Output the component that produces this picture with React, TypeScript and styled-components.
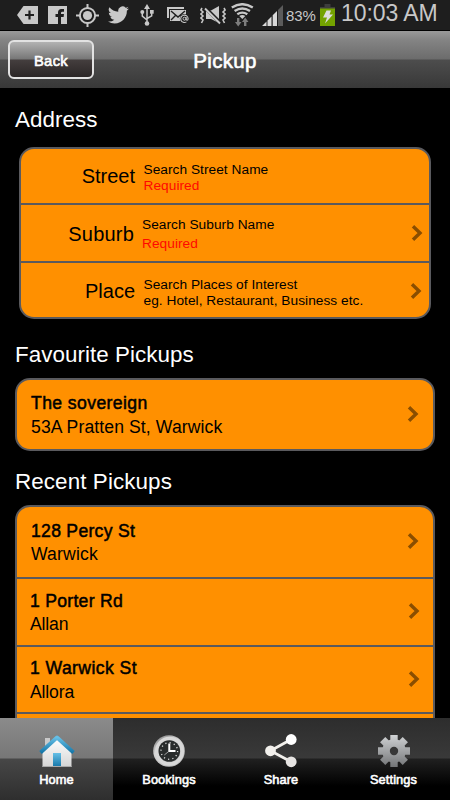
import React from "react";
import styled, { createGlobalStyle } from "styled-components";

const GlobalStyle = createGlobalStyle`
  * { box-sizing: border-box; }
  html, body { margin: 0; background: #000; }
  body { font-family: "Liberation Sans", Arial, sans-serif; overflow: hidden; }
`;

const Screen = styled.div`
  width: 450px;
  height: 800px;
  display: flex;
  flex-direction: column;
  overflow: hidden;
  background: #000;
`;

const StatusBar = styled.header`
  height: 30px;
  flex: none;
  display: flex;
  align-items: flex-start;
  background: #1e1e1e;
  color: #c8c8c8;
`;

const StatusIcon = styled.svg<{ $left: number; $top: number }>`
  flex: none;
  display: block;
  margin-left: ${(p) => p.$left}px;
  margin-top: ${(p) => p.$top}px;
`;

const Battery = styled.span`
  margin-left: 3px;
  width: 33px;
  flex: none;
  font-size: 15px;
  line-height: 31px;
  letter-spacing: -0.1px;
  white-space: nowrap;
`;

const Clock = styled.span`
  margin-left: 6px;
  font-size: 23px;
  line-height: 27px;
  letter-spacing: -0.08px;
  white-space: nowrap;
`;

const NavBar = styled.nav`
  height: 59px;
  flex: none;
  display: grid;
  grid-template-columns: 94px 1fr 94px;
  align-items: start;
  border-top: 1px solid #000;
  border-bottom: 1px solid #000;
  background: linear-gradient(#999 0, #858585 8px, #6c6c6c 28px, #4d4d4d 29px, #383838 57px);
`;

const BackButton = styled.button`
  margin: 9px 0 0 8px;
  width: 86px;
  height: 39px;
  padding: 1px 0 0;
  border: 2px solid #e2e2e2;
  border-radius: 6px;
  background: linear-gradient(#b2b2b2 0, #777 17px, #443e3e 18px, #2b2626 35px);
  color: #fff;
  font: 14.8px/36px "Liberation Sans", Arial, sans-serif;
  -webkit-text-stroke: 0.6px #fff;
  letter-spacing: 0.3px;
`;

const Title = styled.h1`
  margin: 0;
  text-align: center;
  color: #fff;
  font-size: 20.5px;
  font-weight: 400;
  line-height: 57px;
  letter-spacing: 0.3px;
  padding-top: 1px;
  -webkit-text-stroke: 0.6px #fff;
`;

const Content = styled.main`
  flex: 1;
  min-height: 0;
  overflow: hidden;
  padding: 0 15px;
`;

const Heading = styled.h2<{ $top: number; $height: number; $spacing?: number }>`
  margin: 0;
  height: ${(p) => p.$height}px;
  padding-top: ${(p) => p.$top}px;
  color: #fff;
  font-size: 22.4px;
  font-weight: 400;
  line-height: 26px;
  letter-spacing: ${(p) => p.$spacing ?? 0}px;
  white-space: nowrap;
`;

const Card = styled.section<{ $inset?: boolean }>`
  margin: 0 ${(p) => (p.$inset ? 4 : 0)}px;
  border: 2px solid #5a5a5e;
  border-radius: 15px;
  background: #ff9000;
  overflow: hidden;
`;

const Row = styled.div<{ $height: number; $right: number }>`
  display: flex;
  height: ${(p) => p.$height}px;
  padding-right: ${(p) => p.$right}px;
  color: #000;
  & + & {
    border-top: 2px solid #5a5a5e;
  }
`;

const FieldLabel = styled.div<{ $width: number; $top: number; $spacing: number }>`
  width: ${(p) => p.$width}px;
  flex: none;
  padding-top: ${(p) => p.$top}px;
  text-align: right;
  font-size: 20px;
  line-height: 24px;
  letter-spacing: ${(p) => p.$spacing}px;
`;

const Details = styled.div<{ $top: number; $left: number; $gap: number }>`
  flex: 1;
  display: flex;
  flex-direction: column;
  gap: ${(p) => p.$gap}px;
  padding: ${(p) => p.$top}px 0 0 ${(p) => p.$left}px;
  font-size: 13.7px;
  line-height: 16px;
  letter-spacing: 0.04px;
  white-space: nowrap;
`;

const Detail = styled.span<{ $required?: boolean }>`
  color: ${(p) => (p.$required ? "#ff0800" : "#000")};
`;

const Place = styled.div<{ $left: number; $top: number }>`
  flex: 1;
  padding: ${(p) => p.$top}px 0 0 ${(p) => p.$left}px;
  white-space: nowrap;
`;

const PlaceName = styled.div<{ $spacing: number }>`
  font-size: 17.6px;
  line-height: 24px;
  letter-spacing: ${(p) => p.$spacing}px;
  -webkit-text-stroke: 0.5px #000;
`;

const PlaceAddress = styled.div<{ $spacing: number; $line: number }>`
  font-size: 17.6px;
  line-height: ${(p) => p.$line}px;
  letter-spacing: ${(p) => p.$spacing}px;
`;

const ChevronIcon = styled.svg<{ $top: number }>`
  flex: none;
  display: block;
  margin-top: ${(p) => p.$top}px;
`;

const TabBar = styled.footer`
  flex: none;
  height: 82px;
  display: grid;
  grid-template-columns: 113px 112px 112px 113px;
`;

const Tab = styled.div<{ $active?: boolean }>`
  display: flex;
  flex-direction: column;
  align-items: center;
  padding-top: 15px;
  background: ${(p) =>
    p.$active
      ? "linear-gradient(#8b8b8b 0, #777 40px, #474747 41px, #2e2e2e 82px)"
      : "linear-gradient(#2d2d2d 0, #393939 40px, #202020 41px, #000 68px)"};
`;

const TabLabel = styled.span`
  margin-top: 1px;
  color: #fff;
  font-size: 12.8px;
  line-height: 16px;
  letter-spacing: 0.1px;
  -webkit-text-stroke: 0.6px #fff;
`;

function Chevron({ top }: { top: number }) {
  return (
    <ChevronIcon $top={top} width="12" height="18" viewBox="0 0 12 18">
      <path d="M2 2.2 9 9 2 15.8" fill="none" stroke="#8a4e00" strokeWidth="3.4" />
    </ChevronIcon>
  );
}

function StatusIcons() {
  return (
    <>
      <StatusIcon $left={17} $top={5} width="21" height="20" viewBox="0 0 21 20">
        <path d="M6.5 1H21v18H6.5L0 10z" fill="#c8c8c8" />
        <path d="M8 10h9M12.5 5.5v9" stroke="#1e1e1e" strokeWidth="2.2" />
      </StatusIcon>
      <StatusIcon $left={10} $top={5} width="19" height="20" viewBox="0 0 19 20">
        <path d="M0 1h19v18H0z" fill="#c8c8c8" />
        <path d="M10 19v-7H7.5V9H10V7.5q0-3.5 3.5-3.5H16v2.8h-1.8q-1.2 0-1.2 1.2v1h3l-.4 3H13v7z" fill="#1e1e1e" />
      </StatusIcon>
      <StatusIcon $left={9} $top={4} width="23" height="23" viewBox="0 0 23 23">
        <g fill="none" stroke="#c8c8c8" strokeWidth="2">
          <circle cx="11.5" cy="11.5" r="7.6" />
          <path d="M11.5 0v4M11.5 19v4M0 11.5h4M19 11.5h4" />
        </g>
        <circle cx="11.5" cy="11.5" r="4.6" fill="#c8c8c8" />
      </StatusIcon>
      <StatusIcon $left={9} $top={5} width="21" height="19" viewBox="0 1.5 24 20">
        <path
          d="M23.95 4.57a10 10 0 0 1-2.82.77 4.96 4.96 0 0 0 2.16-2.72c-.95.55-2 .96-3.13 1.18a4.92 4.92 0 0 0-8.38 4.48C7.69 8.1 4.07 6.13 1.64 3.16a4.92 4.92 0 0 0 1.52 6.57 4.9 4.9 0 0 1-2.23-.61v.06a4.92 4.92 0 0 0 3.95 4.83 5 5 0 0 1-2.21.08 4.94 4.94 0 0 0 4.6 3.42A9.87 9.87 0 0 1 0 19.54a14 14 0 0 0 7.55 2.21c9.05 0 14-7.5 14-13.98l-.02-.64a9.9 9.9 0 0 0 2.42-2.56z"
          fill="#c8c8c8"
        />
      </StatusIcon>
      <StatusIcon $left={11} $top={4} width="14" height="23" viewBox="0 0 14 23">
        <g fill="none" stroke="#c8c8c8" strokeWidth="1.5">
          <path d="M7 3v16M2.3 8v4.2L7 16M11.7 8v3.8L7 14.5" />
        </g>
        <path d="M7 0l3 5H4z" fill="#c8c8c8" />
        <circle cx="7" cy="19.5" r="2.3" fill="#c8c8c8" />
        <circle cx="2.3" cy="8" r="2" fill="#c8c8c8" />
        <path d="M10 6h3.7v3.7H10z" fill="#c8c8c8" />
      </StatusIcon>
      <StatusIcon $left={13} $top={6} width="22" height="18" viewBox="0 0 22 18">
        <path d="M0 1h17v2H2v9H0z" fill="#c8c8c8" />
        <path d="M3 4h16v11H3z" fill="#c8c8c8" />
        <path d="M4 5l7 6 7-6M4 14l5-5M18 13l-5-4" fill="none" stroke="#1e1e1e" strokeWidth="1.4" />
        <circle cx="17.5" cy="12.8" r="4.7" fill="#1e1e1e" />
        <path d="M19.4 15.9a3.7 3.7 0 1 1 1.7-3.2c0 2-2 2-2 .3v-2" fill="none" stroke="#c8c8c8" strokeWidth="1.1" />
        <circle cx="17.5" cy="12.7" r="1.5" fill="none" stroke="#c8c8c8" />
      </StatusIcon>
      <StatusIcon $left={11} $top={6} width="26" height="19" viewBox="0 0 26 19">
        <g fill="none" stroke="#c8c8c8" strokeWidth="1.6">
          <path d="M2 2L.9 4 3 6 .9 8 3 10 .9 12 3 14 1.5 17M24 2l1.1 2L23 6l2.1 2L23 10l2.1 2L23 14l1.5 3" />
        </g>
        <path d="M6 4.500h5l8-4.500v17l-8-4H6z" fill="#c8c8c8" />
        <path d="M6 2.500l14 14" stroke="#1e1e1e" strokeWidth="3.6" />
        <path d="M5 2.500l15 15" stroke="#c8c8c8" strokeWidth="1.9" />
      </StatusIcon>
      <StatusIcon $left={5} $top={3} width="23" height="24" viewBox="0 0 23 24">
        <g fill="none" stroke="#c8c8c8" strokeWidth="2.4">
          <path d="M.8 4.5q10.5-6.6 21 0M3.6 8q7.7-5 15.4 0M6.3 11.3q5-3.4 10 0" />
        </g>
        <path d="M8.3 13q3-2 6 0l-3 3z" fill="#c8c8c8" />
        <path d="M6 15h2.4v4h2.1L7.2 23.5 4 19h2zM13 23h2.4v-4h2.1l-3.3-4.5L11 19h2z" fill="#7d7d7d" />
      </StatusIcon>
      <StatusIcon $left={8} $top={5} width="21" height="22" viewBox="0 0 21 22">
        <path d="M0 21l4.5-4.5V21zM5.5 15.5L9.5 11.5v9.5h-4zM10.7 10.3l4.3-4.3V21h-4.3z" fill="#d8d8d8" />
        <path d="M16 5l5-5v21h-5z" fill="#5b5b5b" />
      </StatusIcon>
    </>
  );
}

function HomeIcon() {
  return (
    <svg width="36" height="38" viewBox="0 0 36 38">
      <defs>
        <linearGradient id="roof" x1="0" y1="0" x2="0" y2="1">
          <stop offset="0" stopColor="#65bfe6" />
          <stop offset="1" stopColor="#1677a9" />
        </linearGradient>
        <linearGradient id="wall" x1="0" y1="0" x2="0" y2="1">
          <stop offset="0" stopColor="#fff" />
          <stop offset="1" stopColor="#d5d5d5" />
        </linearGradient>
      </defs>
      <path d="M6 5h5v9H6z" fill="#c9c9c9" />
      <path d="M18 5l14.5 13v16h-29V18z" fill="url(#wall)" />
      <path d="M1.5 19.5L18 4.5l16.5 15" fill="none" stroke="url(#roof)" strokeWidth="3.8" strokeLinejoin="round" />
      <path d="M14 20h8v13.5h-8z" fill="url(#roof)" />
      <path d="M3.5 33.5h29" stroke="#aaa" />
    </svg>
  );
}

function ClockIcon() {
  return (
    <svg width="34" height="38" viewBox="0 0 34 38">
      <defs>
        <linearGradient id="rim" x1="0" y1="0" x2="0.6" y2="1">
          <stop offset="0" stopColor="#777" />
          <stop offset="0.45" stopColor="#d5d5d5" />
          <stop offset="1" stopColor="#bbb" />
        </linearGradient>
      </defs>
      <circle cx="17" cy="18" r="15.8" fill="url(#rim)" />
      <circle cx="17.5" cy="18.3" r="12.8" fill="none" stroke="#d8d8d8" strokeWidth="3.5" />
      <circle cx="17.3" cy="18" r="10.8" fill="#292c2c" />
      <circle cx="17.3" cy="18" r="8.3" fill="none" stroke="#ddd" strokeWidth="1.3" strokeDasharray="1.2 3.146" />
      <path d="M17.3 10.5V18H23.5" fill="none" stroke="#fff" strokeWidth="2" />
      <path d="M17.3 18l-5 4" stroke="#bbb" strokeWidth="0.8" />
    </svg>
  );
}

function ShareIcon() {
  return (
    <svg width="34" height="38" viewBox="0 0 34 38">
      <path d="M27 6.5L6.5 17.8 27 28.8" fill="none" stroke="#f2f0ec" strokeWidth="2.8" />
      <circle cx="27.2" cy="6.5" r="5.4" fill="#fff" />
      <circle cx="6.5" cy="17.8" r="5.4" fill="#f2f0ec" />
      <circle cx="27.2" cy="28.8" r="5.4" fill="#e6e4e2" />
    </svg>
  );
}

const teeth = [0, 45, 90, 135];

function GearIcon() {
  return (
    <svg width="34" height="38" viewBox="0 0 34 38">
      <defs>
        <linearGradient id="metal" x1="0" y1="2" x2="0" y2="34" gradientUnits="userSpaceOnUse">
          <stop offset="0" stopColor="#d0d2d4" />
          <stop offset="1" stopColor="#737577" />
        </linearGradient>
        <mask id="gear">
          <circle cx="17" cy="18" r="11.8" fill="#fff" />
          {teeth.map((angle) => (
            <path key={angle} d="M13.3 2h7.4v32h-7.4z" fill="#fff" transform={`rotate(${angle} 17 18)`} />
          ))}
          <circle cx="17" cy="18" r="4.2" fill="#000" />
        </mask>
      </defs>
      <path d="M0 0h34v38H0z" fill="url(#metal)" mask="url(#gear)" />
    </svg>
  );
}

const recent = [
  { name: "128 Percy St", suburb: "Warwick", height: 70, left: 14, top: 12, line: 23, chevron: 25, right: 14, ns: 0.28, as: 0.15 },
  { name: "1 Porter Rd", suburb: "Allan", height: 68, left: 13, top: 10, line: 23, chevron: 23, right: 13, ns: 0.28, as: -0.15 },
  { name: "1 Warwick St", suburb: "Allora", height: 67, left: 13, top: 9, line: 24, chevron: 23, right: 13, ns: 0.42, as: -0.15 },
];

export default function App() {
  return (
    <Screen>
      <GlobalStyle />
      <StatusBar>
        <StatusIcons />
        <Battery>83%</Battery>
        <StatusIcon $left={1} $top={4} width="15" height="22" viewBox="0 0 15 22">
          <path d="M4.5 0h6v3H15v2H0V3h4.5z" fill="#3d3d3d" />
          <path d="M0 4.5h15V22H0z" fill="#74a300" />
          <path d="M6.5 6.5H11l-1.5 4H13L5 19.5l2-6H3z" fill="#ddd" />
        </StatusIcon>
        <Clock>10:03 AM</Clock>
      </StatusBar>
      <NavBar>
        <BackButton>Back</BackButton>
        <Title>Pickup</Title>
      </NavBar>
      <Content>
        <Heading $top={18} $height={58} $spacing={0.05}>Address</Heading>
        <Card $inset>
          <Row $height={54} $right={8}>
            <FieldLabel $width={114} $top={15} $spacing={0}>Street</FieldLabel>
            <Details $top={13} $left={8.5} $gap={0}>
              <Detail>Search Street Name</Detail>
              <Detail $required>Required</Detail>
            </Details>
          </Row>
          <Row $height={58} $right={6}>
            <FieldLabel $width={113} $top={17} $spacing={0.2}>Suburb</FieldLabel>
            <Details $top={12} $left={8} $gap={3}>
              <Detail>Search Suburb Name</Detail>
              <Detail $required>Required</Detail>
            </Details>
            <Chevron top={19} />
          </Row>
          <Row $height={56} $right={7}>
            <FieldLabel $width={114} $top={16} $spacing={0}>Place</FieldLabel>
            <Details $top={14} $left={8.5} $gap={0}>
              <Detail>Search Places of Interest</Detail>
              <Detail>eg. Hotel, Restaurant, Business etc.</Detail>
            </Details>
            <Chevron top={19} />
          </Row>
        </Card>
        <Heading $top={23} $height={59} $spacing={0.05}>Favourite Pickups</Heading>
        <Card>
          <Row $height={69} $right={14}>
            <Place $left={14} $top={11}>
              <PlaceName $spacing={0.4}>The sovereign</PlaceName>
              <PlaceAddress $spacing={0.1} $line={24}>53A Pratten St, Warwick</PlaceAddress>
            </Place>
            <Chevron top={25} />
          </Row>
        </Card>
        <Heading $top={18} $height={54} $spacing={0.1}>Recent Pickups</Heading>
        <Card>
          {recent.map((r) => (
            <Row key={r.name} $height={r.height} $right={r.right}>
              <Place $left={r.left} $top={r.top}>
                <PlaceName $spacing={r.ns}>{r.name}</PlaceName>
                <PlaceAddress $spacing={r.as} $line={r.line}>{r.suburb}</PlaceAddress>
              </Place>
              <Chevron top={r.chevron} />
            </Row>
          ))}
          <Row $height={68} $right={13} />
        </Card>
      </Content>
      <TabBar>
        <Tab $active>
          <HomeIcon />
          <TabLabel>Home</TabLabel>
        </Tab>
        <Tab>
          <ClockIcon />
          <TabLabel>Bookings</TabLabel>
        </Tab>
        <Tab>
          <ShareIcon />
          <TabLabel>Share</TabLabel>
        </Tab>
        <Tab>
          <GearIcon />
          <TabLabel>Settings</TabLabel>
        </Tab>
      </TabBar>
    </Screen>
  );
}
